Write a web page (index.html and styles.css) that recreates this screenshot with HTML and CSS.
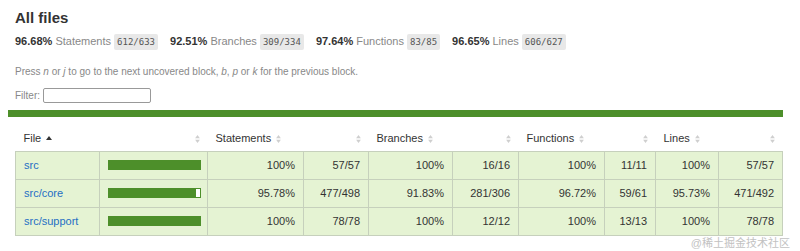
FILE: index.html
```html
<!DOCTYPE html>
<html>
<head>
    <meta charset="utf-8" />
    <title>Code coverage report for All files</title>
    <link rel="stylesheet" href="styles.css">
</head>
<body>
    <div class="wrapper">
        <div class="pad1">
            <h1>All files</h1>
            <div class="summary">
                <div class="stat"><span class="strong">96.68%</span> <span class="quiet">Statements</span> <span class="fraction">612/633</span></div>
                <div class="stat"><span class="strong">92.51%</span> <span class="quiet">Branches</span> <span class="fraction">309/334</span></div>
                <div class="stat"><span class="strong">97.64%</span> <span class="quiet">Functions</span> <span class="fraction">83/85</span></div>
                <div class="stat"><span class="strong">96.65%</span> <span class="quiet">Lines</span> <span class="fraction">606/627</span></div>
            </div>
            <p class="quiet hint">Press <em>n</em> or <em>j</em> to go to the next uncovered block, <em>b</em>, <em>p</em> or <em>k</em> for the previous block.</p>
            <div class="filter">
                <label for="fileSearch" class="quiet">Filter:</label>
                <input type="search" id="fileSearch">
            </div>
        </div>
        <div class="status-line"></div>
        <div class="pad1">
            <table class="coverage-summary">
                <thead>
                    <tr>
                        <th class="file">File <svg class="sort-asc" viewBox="0 0 6 4"><path d="M3 0L6 4H0Z"/></svg></th>
                        <th class="pic right"><svg class="sorter" viewBox="0 0 6 10"><path d="M3 0L6 4H0ZM3 10L6 6H0Z"/></svg></th>
                        <th class="pct">Statements <svg class="sorter" viewBox="0 0 6 10"><path d="M3 0L6 4H0ZM3 10L6 6H0Z"/></svg></th>
                        <th class="abs right"><svg class="sorter" viewBox="0 0 6 10"><path d="M3 0L6 4H0ZM3 10L6 6H0Z"/></svg></th>
                        <th class="pct">Branches <svg class="sorter" viewBox="0 0 6 10"><path d="M3 0L6 4H0ZM3 10L6 6H0Z"/></svg></th>
                        <th class="abs right"><svg class="sorter" viewBox="0 0 6 10"><path d="M3 0L6 4H0ZM3 10L6 6H0Z"/></svg></th>
                        <th class="pct">Functions <svg class="sorter" viewBox="0 0 6 10"><path d="M3 0L6 4H0ZM3 10L6 6H0Z"/></svg></th>
                        <th class="abs right"><svg class="sorter" viewBox="0 0 6 10"><path d="M3 0L6 4H0ZM3 10L6 6H0Z"/></svg></th>
                        <th class="pct">Lines <svg class="sorter" viewBox="0 0 6 10"><path d="M3 0L6 4H0ZM3 10L6 6H0Z"/></svg></th>
                        <th class="abs right"><svg class="sorter" viewBox="0 0 6 10"><path d="M3 0L6 4H0ZM3 10L6 6H0Z"/></svg></th>
                    </tr>
                </thead>
                <tbody>
                    <tr>
                        <td class="file"><a href="src/index.html">src</a></td>
                        <td class="pic"><div class="chart"><div class="cover-fill" style="width: 100%"></div></div></td>
                        <td class="pct">100%</td>
                        <td class="abs">57/57</td>
                        <td class="pct">100%</td>
                        <td class="abs">16/16</td>
                        <td class="pct">100%</td>
                        <td class="abs">11/11</td>
                        <td class="pct">100%</td>
                        <td class="abs">57/57</td>
                    </tr>
                    <tr>
                        <td class="file"><a href="src/core/index.html">src/core</a></td>
                        <td class="pic"><div class="chart"><div class="cover-fill" style="width: 95%"></div><div class="cover-empty"></div></div></td>
                        <td class="pct">95.78%</td>
                        <td class="abs">477/498</td>
                        <td class="pct">91.83%</td>
                        <td class="abs">281/306</td>
                        <td class="pct">96.72%</td>
                        <td class="abs">59/61</td>
                        <td class="pct">95.73%</td>
                        <td class="abs">471/492</td>
                    </tr>
                    <tr>
                        <td class="file"><a href="src/support/index.html">src/support</a></td>
                        <td class="pic"><div class="chart"><div class="cover-fill" style="width: 100%"></div></div></td>
                        <td class="pct">100%</td>
                        <td class="abs">78/78</td>
                        <td class="pct">100%</td>
                        <td class="abs">12/12</td>
                        <td class="pct">100%</td>
                        <td class="abs">13/13</td>
                        <td class="pct">100%</td>
                        <td class="abs">78/78</td>
                    </tr>
                </tbody>
            </table>
        </div>
    </div>
    <div class="watermark">@稀土掘金技术社区</div>
</body>
</html>
```

FILE: styles.css
```css
body {
    margin: 0;
    padding: 0;
    font-family: "Liberation Sans", Helvetica, Arial, "Noto Sans CJK SC", sans-serif;
    font-size: 11px;
    color: #333;
    background: white;
}

.pad1 {
    padding: 0 15px;
}

h1 {
    font-size: 15px;
    font-weight: bold;
    line-height: 20px;
    margin: 0;
    padding-top: 8px;
}

.summary {
    display: flex;
    gap: 12px;
    margin-top: 5px;
    height: 16px;
    align-items: center;
}

.strong {
    font-weight: bold;
}

.quiet {
    color: #888;
}

.fraction {
    font-family: "DejaVu Sans Mono", "Liberation Mono", monospace;
    font-size: 9px;
    color: #555;
    background: #e8e8e8;
    padding: 3px 3px;
    border-radius: 2px;
}

.hint {
    margin: 16px 0 0;
    font-size: 10px;
    line-height: 14px;
}

.filter {
    display: flex;
    align-items: center;
    gap: 3px;
    margin-top: 9px;
    font-size: 10px;
}

.filter input {
    width: 108px;
    height: 15px;
    box-sizing: border-box;
    border: 1px solid #999;
    border-radius: 2px;
    padding: 0 3px;
    margin: 0;
}

.status-line {
    height: 7px;
    margin: 7px 17px 0 8px;
    background: #4d8f2a;
}

.coverage-summary {
    border-collapse: collapse;
    width: 768px;
    margin-top: 12px;
    table-layout: fixed;
}

.coverage-summary th {
    font-weight: normal;
    text-align: left;
    height: 22px;
    padding: 0 8px 4px;
    color: #333;
    white-space: nowrap;
}

.coverage-summary th.right {
    text-align: right;
}

.coverage-summary td {
    height: 28px;
    padding: 0 8px;
    text-align: right;
    border-right: 1px solid #c6d0bc;
    border-bottom: 1px solid #c6d0bc;
    background: #e5f3d3;
    white-space: nowrap;
}

.coverage-summary tbody tr:first-child td {
    border-top: 1px solid #c6d0bc;
}

.coverage-summary td:first-child {
    border-left: 1px solid #c6d0bc;
}

.coverage-summary td.file {
    text-align: left;
}

.coverage-summary td.file a {
    color: #1f6fc4;
    text-decoration: none;
}

.coverage-summary tr > :nth-child(1) { width: 84px; }
.coverage-summary tr > :nth-child(2) { width: 108px; }
.coverage-summary tr > :nth-child(3) { width: 96px; }
.coverage-summary tr > :nth-child(4) { width: 65px; }
.coverage-summary tr > :nth-child(5) { width: 84px; }
.coverage-summary tr > :nth-child(6) { width: 66px; }
.coverage-summary tr > :nth-child(7) { width: 86px; }
.coverage-summary tr > :nth-child(8) { width: 51px; }
.coverage-summary tr > :nth-child(9) { width: 63px; }
.coverage-summary tr > :nth-child(10) { width: 64px; }

.coverage-summary th,
.coverage-summary td {
    box-sizing: border-box;
}

.sort-asc {
    width: 6px;
    height: 4px;
    margin-left: 2px;
    vertical-align: 2px;
    fill: #333;
}

.sorter {
    width: 5px;
    height: 8px;
    margin-left: 2px;
    vertical-align: -1px;
    fill: #cfcfcf;
}

.chart {
    display: flex;
    width: 93px;
    height: 10px;
}

.cover-fill {
    height: 100%;
    background: #4d8f2a;
}

.cover-empty {
    flex: 1;
    height: 100%;
    box-sizing: border-box;
    background: white;
    border: 1px solid #4d8f2a;
    border-left: none;
}

.watermark {
    position: absolute;
    right: 10px;
    top: 234px;
    font-size: 11px;
    color: #c2c2c2;
}
```
